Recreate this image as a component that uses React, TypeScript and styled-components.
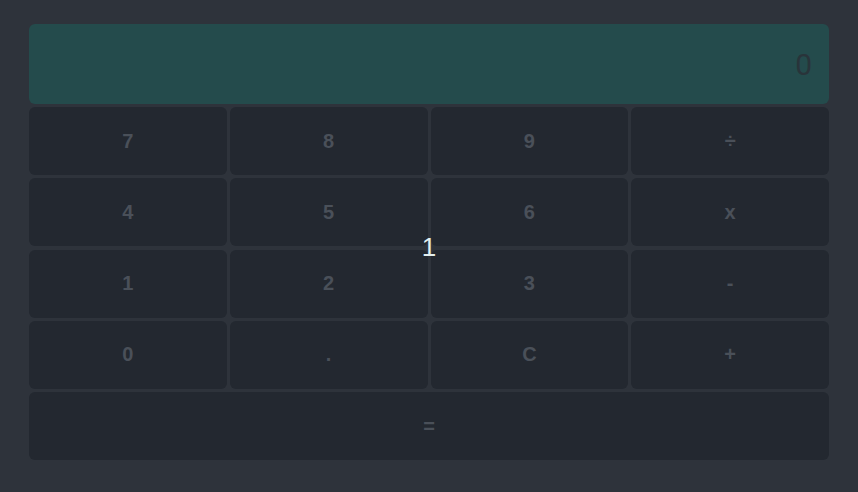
import * as React from 'react';
import styled, { createGlobalStyle } from 'styled-components';

const keys = ['7', '8', '9', '÷', '4', '5', '6', 'x', '1', '2', '3', '-', '0', '.', 'C', '+'];

const App = () => {
    const [value, setValue] = React.useState('0');

    const press = (k: string) => {
        if (k === 'C') {
            setValue('0');
            return;
        }
        setValue(v => (v === '0' ? k : v + k));
    };

    return (
        <Page>
            <GlobalStyle />
            <Calculator>
                <Display>{value}</Display>
                <Keys>
                    {keys.map(k => (
                        <Key key={k} onClick={() => press(k)}>{k}</Key>
                    ))}
                    <Key wide onClick={() => press('=')}>=</Key>
                </Keys>
                <Overlay>1</Overlay>
            </Calculator>
        </Page>
    );
};

const GlobalStyle = createGlobalStyle`
    html, body {
        margin: 0;
        background: #2e333b;
    }
`;

const Page = styled.div`
    width: 858px;
    height: 492px;
    box-sizing: border-box;
    padding: 24px 29px 0 29px;
    background: #2e333b;
    font-family: "Liberation Sans", Arial, sans-serif;
`;

const Calculator = styled.div`
    position: relative;
    display: flex;
    flex-direction: column;
    gap: 3px;
`;

const Display = styled.div`
    height: 80px;
    border-radius: 6px;
    background: #244b4c;
    color: #29343a;
    font-family: Roboto, "Liberation Sans", sans-serif;
    font-size: 30px;
    display: flex;
    align-items: center;
    justify-content: flex-end;
    padding-right: 17px;
`;

const Keys = styled.div`
    display: grid;
    grid-template-columns: repeat(4, 1fr);
    grid-auto-rows: 68px;
    gap: 3.25px 3px;
`;

const Key = styled.button<{ wide?: boolean }>`
    grid-column: ${p => (p.wide ? '1 / -1' : 'auto')};
    border: none;
    border-radius: 6px;
    background: #232830;
    color: #4a5059;
    font-family: "Liberation Sans", Arial, sans-serif;
    font-weight: bold;
    font-size: 20px;
    display: flex;
    align-items: center;
    justify-content: center;
    padding: 0;
    cursor: pointer;
`;

const Overlay = styled.div`
    position: absolute;
    left: 50%;
    top: 210px;
    transform: translateX(-50%);
    color: #e2eeee;
    font-size: 26px;
    line-height: 1;
    pointer-events: none;
`;

export default App;
